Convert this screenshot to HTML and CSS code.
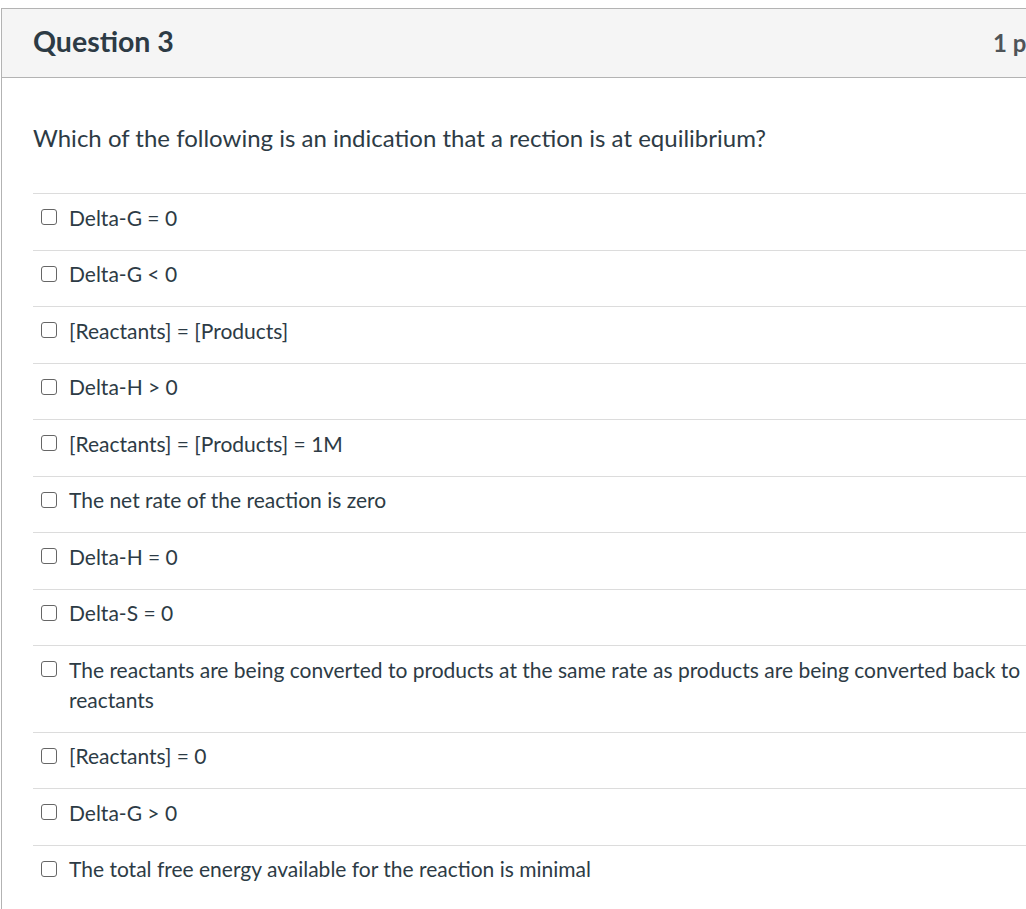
FILE: index.html
```html
<!DOCTYPE html>
<html>
<head>
<meta charset="utf-8">
<link rel="stylesheet" href="styles.css">
</head>
<body>
<div class="card">
  <div class="header">
    <h2 class="title">Question 3</h2>
    <span class="points">1 pts</span>
  </div>
  <div class="content">
    <p class="question">Which of the following is an indication that a rection is at equilibrium?</p>
    <ul class="answers">
      <li class="answer"><span class="box"></span><span class="label">Delta-G = 0</span></li>
      <li class="answer"><span class="box"></span><span class="label">Delta-G &lt; 0</span></li>
      <li class="answer"><span class="box"></span><span class="label">[Reactants] = [Products]</span></li>
      <li class="answer"><span class="box"></span><span class="label">Delta-H &gt; 0</span></li>
      <li class="answer"><span class="box"></span><span class="label">[Reactants] = [Products] = 1M</span></li>
      <li class="answer"><span class="box"></span><span class="label">The net rate of the reaction is zero</span></li>
      <li class="answer"><span class="box"></span><span class="label">Delta-H = 0</span></li>
      <li class="answer"><span class="box"></span><span class="label">Delta-S = 0</span></li>
      <li class="answer"><span class="box"></span><span class="label">The reactants are being converted to products at the same rate as products are being converted back to reactants</span></li>
      <li class="answer"><span class="box"></span><span class="label">[Reactants] = 0</span></li>
      <li class="answer"><span class="box"></span><span class="label">Delta-G &gt; 0</span></li>
      <li class="answer"><span class="box"></span><span class="label">The total free energy available for the reaction is minimal</span></li>
    </ul>
  </div>
</div>
</body>
</html>
```

FILE: styles.css
```css
html, body {
  margin: 0;
  padding: 0;
  background: #ffffff;
  overflow: hidden;
}
body {
  padding: 8px 0 0 1px;
  font-family: Lato, "Open Sans", sans-serif;
  color: #2d3b45;
}
.card {
  width: 1080px;
  border: 1px solid #b3b3b3;
  border-right: none;
}
.header {
  display: flex;
  justify-content: space-between;
  align-items: center;
  height: 69px;
  background: #f5f5f5;
  border-bottom: 1px solid #b3b3b3;
  padding: 0 0 0 31px;
  box-sizing: border-box;
}
.title {
  margin: 0 0 5px 0;
  font-size: 28.5px;
  font-weight: 700;
  color: #2d3b45;
}
.points {
  font-size: 24px;
  font-weight: 700;
  color: #4f5458;
  width: 89px;
  margin-bottom: 2px;
}
.content {
  padding: 42px 0 40px 31px;
}
.question {
  margin: 0 0 37px 0;
  font-size: 24px;
  line-height: 36px;
}
.answers {
  list-style: none;
  margin: 0;
  padding: 0;
}
.answer {
  display: flex;
  align-items: flex-start;
  border-top: 1px solid #dcdcdc;
  padding: 8.75px 0 16.75px 0;
  font-size: 21px;
  line-height: 30px;
}
.box {
  flex: none;
  width: 14px;
  height: 14px;
  border: 1.5px solid #666666;
  border-radius: 3px;
  margin: 6.5px 12px 0 8px;
}
.label {
  width: 960px;
}
```
